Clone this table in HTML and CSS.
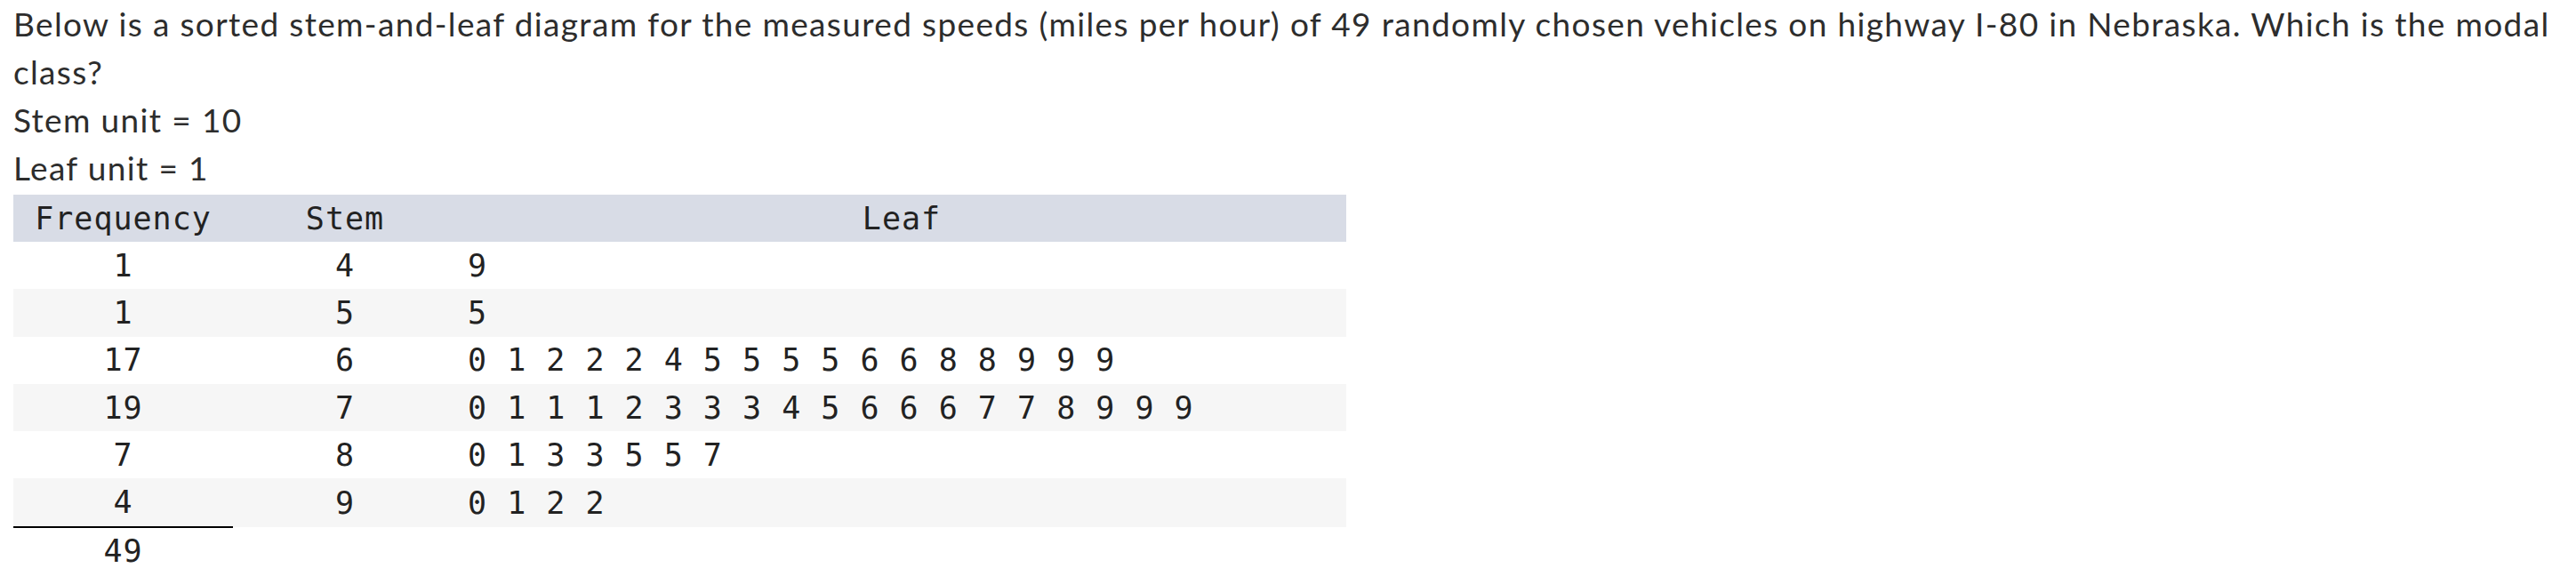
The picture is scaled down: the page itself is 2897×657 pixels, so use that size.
FILE: index.html
```html
<!DOCTYPE html>
<html>
<head>
<meta charset="utf-8">
<link rel="stylesheet" href="styles.css">
</head>
<body>
<div class="question">
  <p class="line">Below is a sorted stem-and-leaf diagram for the measured speeds (miles per hour) of 49 randomly chosen vehicles on highway I-80 in Nebraska. Which is the modal class?</p>
  <p class="line">Stem unit = 10</p>
  <p class="line">Leaf unit = 1</p>
  <table class="sl">
    <thead>
      <tr><th class="c-freq">Frequency</th><th class="c-stem">Stem</th><th class="c-leafh">Leaf</th></tr>
    </thead>
    <tbody>
      <tr><td class="c-freq">1</td><td class="c-stem">4</td><td class="c-leaf">9</td></tr>
      <tr class="alt"><td class="c-freq">1</td><td class="c-stem">5</td><td class="c-leaf">5</td></tr>
      <tr><td class="c-freq">17</td><td class="c-stem">6</td><td class="c-leaf">0 1 2 2 2 4 5 5 5 5 6 6 8 8 9 9 9</td></tr>
      <tr class="alt"><td class="c-freq">19</td><td class="c-stem">7</td><td class="c-leaf">0 1 1 1 2 3 3 3 4 5 6 6 6 7 7 8 9 9 9</td></tr>
      <tr><td class="c-freq">7</td><td class="c-stem">8</td><td class="c-leaf">0 1 3 3 5 5 7</td></tr>
      <tr class="alt"><td class="c-freq">4</td><td class="c-stem">9</td><td class="c-leaf">0 1 2 2</td></tr>
    </tbody>
    <tfoot>
      <tr class="total"><td class="c-freq total-cell">49</td><td></td><td></td></tr>
    </tfoot>
  </table>
</div>
</body>
</html>
```

FILE: styles.css
```css
html, body {
  margin: 0;
  padding: 0;
  background: #ffffff;
}

.question {
  padding: 0 15px;
  color: #2d2d2d;
  font-family: Lato, "Noto Sans", sans-serif;
  font-size: 37px;
  letter-spacing: 1.35px;
}

.line {
  margin: 0;
  line-height: 54px;
}

.sl {
  margin-top: 3px;
  width: 1499px;
  border-collapse: collapse;
  font-family: "DejaVu Sans Mono", "Liberation Mono", monospace;
  font-size: 35px;
  letter-spacing: 1px;
  color: #222222;
}

.sl th {
  background: #d8dce6;
  font-weight: normal;
  height: 53px;
  padding: 0;
  text-align: center;
}

.sl td {
  height: 53.3px;
  padding: 0;
}

.sl tr.alt td {
  background: #f6f6f6;
}

.c-freq {
  width: 247px;
  text-align: center;
}

.c-stem {
  width: 252px;
  text-align: center;
}

.c-leafh {
  text-align: center;
}

.sl td.c-leaf {
  text-align: left;
  padding-left: 12px;
  white-space: pre;
}

.sl tr.total td {
  background: transparent;
}

.sl td.total-cell {
  border-top: 2px solid #000000;
  height: 52px;
}
```
